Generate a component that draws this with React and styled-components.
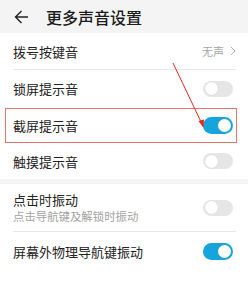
import React from 'react';
import styled, { createGlobalStyle } from 'styled-components';

const GlobalStyle = createGlobalStyle`
  body {
    margin: 0;
    background: #ffffff;
    font-family: "Noto Sans CJK SC", "Noto Sans", sans-serif;
  }
`;

const Page = styled.div`
  position: relative;
  width: 248px;
  height: 301px;
  overflow: hidden;
  background: #ffffff;
`;

const Header = styled.div`
  display: flex;
  align-items: center;
  height: 33px;
  padding-left: 14px;
  background: #f4f4f4;

  h1 {
    margin: 0 0 0 17px;
    font-size: 16px;
    font-weight: 500;
    color: #1c1c1c;
  }
`;

const Gap = styled.div`
  height: 5px;
  background: #f4f4f4;
`;

const Row = styled.div`
  position: relative;
  display: flex;
  align-items: center;
  justify-content: space-between;
  height: ${(p) => p.h}px;
  margin: 0 12px 0 13px;
  border-bottom: ${(p) => (p.divider ? '1px solid #e8e8e8' : 'none')};
  box-sizing: border-box;

  ${(p) =>
    p.highlight &&
    `
    &::after {
      content: '';
      position: absolute;
      left: -8px;
      right: -1px;
      top: 1px;
      bottom: 0;
      border: 1px solid #e0766e;
    }
  `}
`;

const Label = styled.div`
  display: flex;
  flex-direction: column;

  span {
    font-size: 13px;
    color: #222222;
    line-height: 17px;
  }

  small {
    font-size: 11.4px;
    color: #a3a3a3;
    line-height: 15px;
    margin-top: 1px;
  }
`;

const Value = styled.div`
  display: flex;
  align-items: center;
  gap: 6px;
  font-size: 11px;
  color: #a6a6a6;
`;

const Track = styled.div`
  position: relative;
  width: 30px;
  height: ${(p) => (p.on ? 17 : 16)}px;
  border-radius: 9px;
  background: ${(p) => (p.on ? '#16a4dd' : '#e6e6e6')};
  margin-right: 3px;

  &::after {
    content: '';
    position: absolute;
    top: ${(p) => (p.on ? '2px' : '1.5px')};
    left: ${(p) => (p.on ? '15px' : '1.5px')};
    width: 13px;
    height: 13px;
    border-radius: 50%;
    background: #ffffff;
    box-shadow: ${(p) => (p.on ? 'none' : '0 0 1px rgba(0,0,0,0.15)')};
  }
`;

const Overlay = styled.svg`
  position: absolute;
  left: 0;
  top: 0;
  pointer-events: none;
`;

const Switch = ({ on }) => <Track on={on ? 1 : 0} />;

export default function App() {
  return (
    <Page>
      <GlobalStyle />
      <Header>
        <svg width="15" height="14" viewBox="0 0 15 14">
          <path d="M14 7H1.5M7.5 1L1.5 7l6 6" fill="none" stroke="#222" strokeWidth="1.4" />
        </svg>
        <h1>更多声音设置</h1>
      </Header>
      <Row h={37} divider>
        <Label><span>拨号按键音</span></Label>
        <Value>
          无声
          <svg width="6" height="10" viewBox="0 0 6 10">
            <path d="M1 1l4 4-4 4" fill="none" stroke="#b0b0b0" strokeWidth="1" />
          </svg>
        </Value>
      </Row>
      <Row h={37}>
        <Label><span>锁屏提示音</span></Label>
        <Switch />
      </Row>
      <Row h={36} highlight>
        <Label><span>截屏提示音</span></Label>
        <Switch on />
      </Row>
      <Row h={36}>
        <Label><span>触摸提示音</span></Label>
        <Switch />
      </Row>
      <Gap />
      <Row h={48} divider>
        <Label>
          <span>点击时振动</span>
          <small>点击导航键及解锁时振动</small>
        </Label>
        <Switch />
      </Row>
      <Row h={38}>
        <Label><span>屏幕外物理导航键振动</span></Label>
        <Switch on />
      </Row>
      <Overlay width="248" height="301">
        <line x1="173" y1="63" x2="202" y2="124" stroke="#e8281e" strokeWidth="1" />
        <path d="M203.5 128L198.5 121L204 119.5Z" fill="#e8281e" />
      </Overlay>
    </Page>
  );
}
